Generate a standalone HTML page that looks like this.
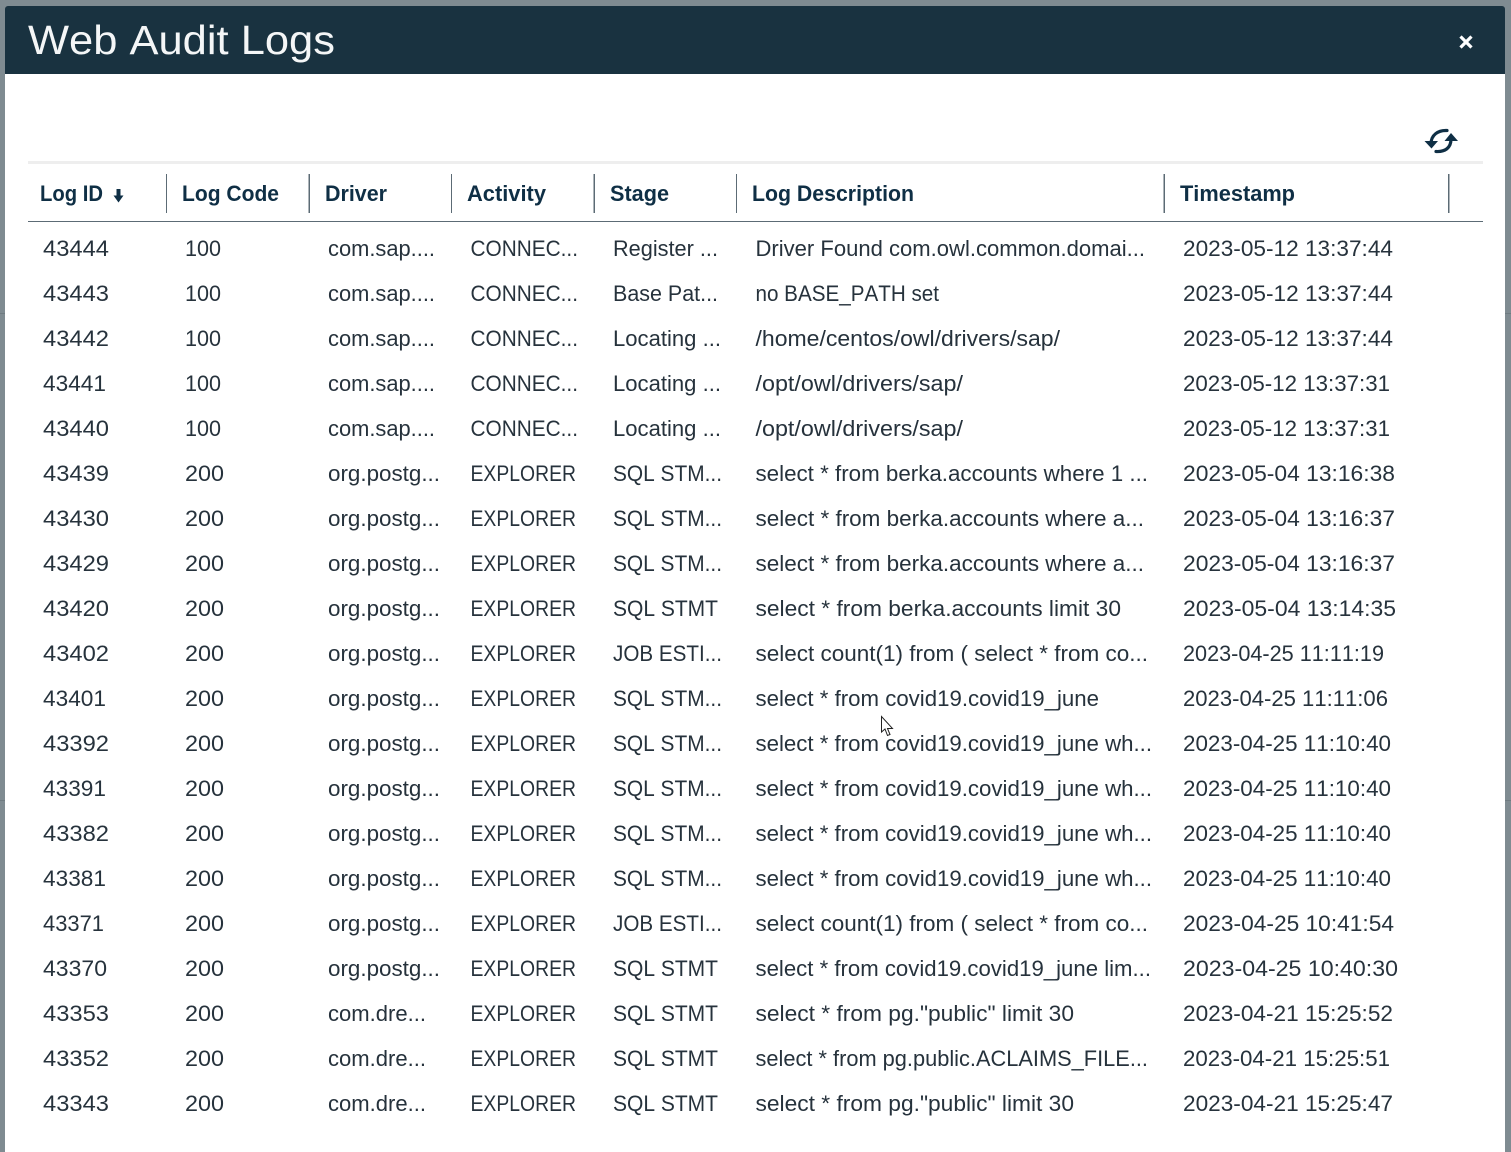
<!DOCTYPE html>
<html><head><meta charset="utf-8"><title>Web Audit Logs</title>
<style>
html,body{margin:0;padding:0;width:1511px;height:1152px;overflow:hidden;background:#7f8b91}
svg{display:block;position:absolute;left:0;top:0}
text{font-family:"Liberation Sans",sans-serif;font-size:22px;fill:#26323c;font-kerning:none}
.h{font-weight:700;fill:#0f2f45}
</style></head><body>
<svg width="1511" height="1152" viewBox="0 0 1511 1152">
<rect width="1511" height="1152" fill="#7f8b91"/>
<rect x="0" y="313" width="5" height="1" fill="#6f7b81"/><rect x="0" y="800" width="5" height="1" fill="#6f7b81"/>
<rect x="1505" y="313" width="6" height="1" fill="#6f7b81"/><rect x="1505" y="800" width="6" height="1" fill="#6f7b81"/>
<rect x="5" y="74" width="1500" height="1078" fill="#fff"/>
<path d="M5 74V9a3 3 0 0 1 3-3H1502a3 3 0 0 1 3 3V74Z" fill="#193240"/>
<text x="28" y="54" textLength="307" lengthAdjust="spacingAndGlyphs" style="font-size:41px;fill:#f4f6f7">Web Audit Logs</text>
<path d="M1460.500 36.500L1471.500 47.500M1471.500 36.500L1460.500 47.500" stroke="#fff" stroke-width="3.200" fill="none"/>
<g fill="none" stroke="#0f2f45" stroke-width="3.200" stroke-linecap="round">
<path d="M1431 144C1431 135 1438 130 1447 130.500"/>
<path d="M1451 139C1451 148 1445 152 1436 151.500"/>
</g>
<path d="M1424.500 141H1438L1431.500 148.500Z M1444.500 141H1458L1451 133Z" fill="#0f2f45"/>
<rect x="28" y="161" width="1455" height="3" fill="#eeeeee"/>
<rect x="28" y="221" width="1455" height="1" fill="#5c6b75"/>
<g fill="#5c6b75">
<rect x="166" y="174" width="1" height="39"/><rect x="308.500" y="174" width="1.500" height="39"/><rect x="451" y="174" width="1" height="39"/><rect x="593.500" y="174" width="1.500" height="39"/><rect x="736" y="174" width="1" height="39"/><rect x="1163.500" y="174" width="1.500" height="39"/><rect x="1448" y="174" width="1.500" height="39"/>
</g>
<g class="hd">
<text class="h" x="40" y="201" textLength="63" lengthAdjust="spacingAndGlyphs">Log ID</text>
<text class="h" x="182" y="201" textLength="97" lengthAdjust="spacingAndGlyphs">Log Code</text>
<text class="h" x="325" y="201" textLength="62" lengthAdjust="spacingAndGlyphs">Driver</text>
<text class="h" x="467" y="201" textLength="79" lengthAdjust="spacingAndGlyphs">Activity</text>
<text class="h" x="610" y="201" textLength="59" lengthAdjust="spacingAndGlyphs">Stage</text>
<text class="h" x="752" y="201" textLength="162" lengthAdjust="spacingAndGlyphs">Log Description</text>
<text class="h" x="1180" y="201" textLength="115" lengthAdjust="spacingAndGlyphs">Timestamp</text>
</g>
<path d="M116.500 189H120.500V195.500H123.500L118.500 202.500L113.500 195.500H116.500Z" fill="#0f2f45"/>

<text x="43" y="256" textLength="66" lengthAdjust="spacingAndGlyphs">43444</text><text x="185" y="256" textLength="36" lengthAdjust="spacingAndGlyphs">100</text><text x="328" y="256" textLength="107" lengthAdjust="spacingAndGlyphs">com.sap....</text><text x="470.500" y="256" textLength="107.500" lengthAdjust="spacingAndGlyphs">CONNEC...</text><text x="613" y="256" textLength="105" lengthAdjust="spacingAndGlyphs">Register ...</text><text x="755.500" y="256" textLength="389.500" lengthAdjust="spacingAndGlyphs">Driver Found com.owl.common.domai...</text><text x="1183" y="256" textLength="210" lengthAdjust="spacingAndGlyphs">2023-05-12 13:37:44</text>
<text x="43" y="301" textLength="66" lengthAdjust="spacingAndGlyphs">43443</text><text x="185" y="301" textLength="36" lengthAdjust="spacingAndGlyphs">100</text><text x="328" y="301" textLength="107" lengthAdjust="spacingAndGlyphs">com.sap....</text><text x="470.500" y="301" textLength="107.500" lengthAdjust="spacingAndGlyphs">CONNEC...</text><text x="613" y="301" textLength="105" lengthAdjust="spacingAndGlyphs">Base Pat...</text><text x="755.500" y="301" textLength="183.500" lengthAdjust="spacingAndGlyphs">no BASE_PATH set</text><text x="1183" y="301" textLength="210" lengthAdjust="spacingAndGlyphs">2023-05-12 13:37:44</text>
<text x="43" y="346" textLength="66" lengthAdjust="spacingAndGlyphs">43442</text><text x="185" y="346" textLength="36" lengthAdjust="spacingAndGlyphs">100</text><text x="328" y="346" textLength="107" lengthAdjust="spacingAndGlyphs">com.sap....</text><text x="470.500" y="346" textLength="107.500" lengthAdjust="spacingAndGlyphs">CONNEC...</text><text x="613" y="346" textLength="108" lengthAdjust="spacingAndGlyphs">Locating ...</text><text x="755.500" y="346" textLength="304.500" lengthAdjust="spacingAndGlyphs">/home/centos/owl/drivers/sap/</text><text x="1183" y="346" textLength="210" lengthAdjust="spacingAndGlyphs">2023-05-12 13:37:44</text>
<text x="43" y="391" textLength="63" lengthAdjust="spacingAndGlyphs">43441</text><text x="185" y="391" textLength="36" lengthAdjust="spacingAndGlyphs">100</text><text x="328" y="391" textLength="107" lengthAdjust="spacingAndGlyphs">com.sap....</text><text x="470.500" y="391" textLength="107.500" lengthAdjust="spacingAndGlyphs">CONNEC...</text><text x="613" y="391" textLength="108" lengthAdjust="spacingAndGlyphs">Locating ...</text><text x="755.500" y="391" textLength="207.500" lengthAdjust="spacingAndGlyphs">/opt/owl/drivers/sap/</text><text x="1183" y="391" textLength="207" lengthAdjust="spacingAndGlyphs">2023-05-12 13:37:31</text>
<text x="43" y="436" textLength="66" lengthAdjust="spacingAndGlyphs">43440</text><text x="185" y="436" textLength="36" lengthAdjust="spacingAndGlyphs">100</text><text x="328" y="436" textLength="107" lengthAdjust="spacingAndGlyphs">com.sap....</text><text x="470.500" y="436" textLength="107.500" lengthAdjust="spacingAndGlyphs">CONNEC...</text><text x="613" y="436" textLength="108" lengthAdjust="spacingAndGlyphs">Locating ...</text><text x="755.500" y="436" textLength="207.500" lengthAdjust="spacingAndGlyphs">/opt/owl/drivers/sap/</text><text x="1183" y="436" textLength="207" lengthAdjust="spacingAndGlyphs">2023-05-12 13:37:31</text>
<text x="43" y="481" textLength="66" lengthAdjust="spacingAndGlyphs">43439</text><text x="185" y="481" textLength="39" lengthAdjust="spacingAndGlyphs">200</text><text x="328" y="481" textLength="112" lengthAdjust="spacingAndGlyphs">org.postg...</text><text x="470.500" y="481" textLength="105.500" lengthAdjust="spacingAndGlyphs">EXPLORER</text><text x="613" y="481" textLength="109" lengthAdjust="spacingAndGlyphs">SQL STM...</text><text x="755.500" y="481" textLength="392.500" lengthAdjust="spacingAndGlyphs">select * from berka.accounts where 1 ...</text><text x="1183" y="481" textLength="212" lengthAdjust="spacingAndGlyphs">2023-05-04 13:16:38</text>
<text x="43" y="526" textLength="66" lengthAdjust="spacingAndGlyphs">43430</text><text x="185" y="526" textLength="39" lengthAdjust="spacingAndGlyphs">200</text><text x="328" y="526" textLength="112" lengthAdjust="spacingAndGlyphs">org.postg...</text><text x="470.500" y="526" textLength="105.500" lengthAdjust="spacingAndGlyphs">EXPLORER</text><text x="613" y="526" textLength="109" lengthAdjust="spacingAndGlyphs">SQL STM...</text><text x="755.500" y="526" textLength="388.500" lengthAdjust="spacingAndGlyphs">select * from berka.accounts where a...</text><text x="1183" y="526" textLength="212" lengthAdjust="spacingAndGlyphs">2023-05-04 13:16:37</text>
<text x="43" y="571" textLength="66" lengthAdjust="spacingAndGlyphs">43429</text><text x="185" y="571" textLength="39" lengthAdjust="spacingAndGlyphs">200</text><text x="328" y="571" textLength="112" lengthAdjust="spacingAndGlyphs">org.postg...</text><text x="470.500" y="571" textLength="105.500" lengthAdjust="spacingAndGlyphs">EXPLORER</text><text x="613" y="571" textLength="109" lengthAdjust="spacingAndGlyphs">SQL STM...</text><text x="755.500" y="571" textLength="388.500" lengthAdjust="spacingAndGlyphs">select * from berka.accounts where a...</text><text x="1183" y="571" textLength="212" lengthAdjust="spacingAndGlyphs">2023-05-04 13:16:37</text>
<text x="43" y="616" textLength="66" lengthAdjust="spacingAndGlyphs">43420</text><text x="185" y="616" textLength="39" lengthAdjust="spacingAndGlyphs">200</text><text x="328" y="616" textLength="112" lengthAdjust="spacingAndGlyphs">org.postg...</text><text x="470.500" y="616" textLength="105.500" lengthAdjust="spacingAndGlyphs">EXPLORER</text><text x="613" y="616" textLength="105" lengthAdjust="spacingAndGlyphs">SQL STMT</text><text x="755.500" y="616" textLength="365.500" lengthAdjust="spacingAndGlyphs">select * from berka.accounts limit 30</text><text x="1183" y="616" textLength="213" lengthAdjust="spacingAndGlyphs">2023-05-04 13:14:35</text>
<text x="43" y="661" textLength="66" lengthAdjust="spacingAndGlyphs">43402</text><text x="185" y="661" textLength="39" lengthAdjust="spacingAndGlyphs">200</text><text x="328" y="661" textLength="112" lengthAdjust="spacingAndGlyphs">org.postg...</text><text x="470.500" y="661" textLength="105.500" lengthAdjust="spacingAndGlyphs">EXPLORER</text><text x="613" y="661" textLength="109" lengthAdjust="spacingAndGlyphs">JOB ESTI...</text><text x="755.500" y="661" textLength="392.500" lengthAdjust="spacingAndGlyphs">select count(1) from ( select * from co...</text><text x="1183" y="661" textLength="201" lengthAdjust="spacingAndGlyphs">2023-04-25 11:11:19</text>
<text x="43" y="706" textLength="63" lengthAdjust="spacingAndGlyphs">43401</text><text x="185" y="706" textLength="39" lengthAdjust="spacingAndGlyphs">200</text><text x="328" y="706" textLength="112" lengthAdjust="spacingAndGlyphs">org.postg...</text><text x="470.500" y="706" textLength="105.500" lengthAdjust="spacingAndGlyphs">EXPLORER</text><text x="613" y="706" textLength="109" lengthAdjust="spacingAndGlyphs">SQL STM...</text><text x="755.500" y="706" textLength="343.500" lengthAdjust="spacingAndGlyphs">select * from covid19.covid19_june</text><text x="1183" y="706" textLength="205" lengthAdjust="spacingAndGlyphs">2023-04-25 11:11:06</text>
<text x="43" y="751" textLength="66" lengthAdjust="spacingAndGlyphs">43392</text><text x="185" y="751" textLength="39" lengthAdjust="spacingAndGlyphs">200</text><text x="328" y="751" textLength="112" lengthAdjust="spacingAndGlyphs">org.postg...</text><text x="470.500" y="751" textLength="105.500" lengthAdjust="spacingAndGlyphs">EXPLORER</text><text x="613" y="751" textLength="109" lengthAdjust="spacingAndGlyphs">SQL STM...</text><text x="755.500" y="751" textLength="396.500" lengthAdjust="spacingAndGlyphs">select * from covid19.covid19_june wh...</text><text x="1183" y="751" textLength="208" lengthAdjust="spacingAndGlyphs">2023-04-25 11:10:40</text>
<text x="43" y="796" textLength="63" lengthAdjust="spacingAndGlyphs">43391</text><text x="185" y="796" textLength="39" lengthAdjust="spacingAndGlyphs">200</text><text x="328" y="796" textLength="112" lengthAdjust="spacingAndGlyphs">org.postg...</text><text x="470.500" y="796" textLength="105.500" lengthAdjust="spacingAndGlyphs">EXPLORER</text><text x="613" y="796" textLength="109" lengthAdjust="spacingAndGlyphs">SQL STM...</text><text x="755.500" y="796" textLength="396.500" lengthAdjust="spacingAndGlyphs">select * from covid19.covid19_june wh...</text><text x="1183" y="796" textLength="208" lengthAdjust="spacingAndGlyphs">2023-04-25 11:10:40</text>
<text x="43" y="841" textLength="66" lengthAdjust="spacingAndGlyphs">43382</text><text x="185" y="841" textLength="39" lengthAdjust="spacingAndGlyphs">200</text><text x="328" y="841" textLength="112" lengthAdjust="spacingAndGlyphs">org.postg...</text><text x="470.500" y="841" textLength="105.500" lengthAdjust="spacingAndGlyphs">EXPLORER</text><text x="613" y="841" textLength="109" lengthAdjust="spacingAndGlyphs">SQL STM...</text><text x="755.500" y="841" textLength="396.500" lengthAdjust="spacingAndGlyphs">select * from covid19.covid19_june wh...</text><text x="1183" y="841" textLength="208" lengthAdjust="spacingAndGlyphs">2023-04-25 11:10:40</text>
<text x="43" y="886" textLength="63" lengthAdjust="spacingAndGlyphs">43381</text><text x="185" y="886" textLength="39" lengthAdjust="spacingAndGlyphs">200</text><text x="328" y="886" textLength="112" lengthAdjust="spacingAndGlyphs">org.postg...</text><text x="470.500" y="886" textLength="105.500" lengthAdjust="spacingAndGlyphs">EXPLORER</text><text x="613" y="886" textLength="109" lengthAdjust="spacingAndGlyphs">SQL STM...</text><text x="755.500" y="886" textLength="396.500" lengthAdjust="spacingAndGlyphs">select * from covid19.covid19_june wh...</text><text x="1183" y="886" textLength="208" lengthAdjust="spacingAndGlyphs">2023-04-25 11:10:40</text>
<text x="43" y="931" textLength="61" lengthAdjust="spacingAndGlyphs">43371</text><text x="185" y="931" textLength="39" lengthAdjust="spacingAndGlyphs">200</text><text x="328" y="931" textLength="112" lengthAdjust="spacingAndGlyphs">org.postg...</text><text x="470.500" y="931" textLength="105.500" lengthAdjust="spacingAndGlyphs">EXPLORER</text><text x="613" y="931" textLength="109" lengthAdjust="spacingAndGlyphs">JOB ESTI...</text><text x="755.500" y="931" textLength="392.500" lengthAdjust="spacingAndGlyphs">select count(1) from ( select * from co...</text><text x="1183" y="931" textLength="211" lengthAdjust="spacingAndGlyphs">2023-04-25 10:41:54</text>
<text x="43" y="976" textLength="64" lengthAdjust="spacingAndGlyphs">43370</text><text x="185" y="976" textLength="39" lengthAdjust="spacingAndGlyphs">200</text><text x="328" y="976" textLength="112" lengthAdjust="spacingAndGlyphs">org.postg...</text><text x="470.500" y="976" textLength="105.500" lengthAdjust="spacingAndGlyphs">EXPLORER</text><text x="613" y="976" textLength="105" lengthAdjust="spacingAndGlyphs">SQL STMT</text><text x="755.500" y="976" textLength="395.500" lengthAdjust="spacingAndGlyphs">select * from covid19.covid19_june lim...</text><text x="1183" y="976" textLength="215" lengthAdjust="spacingAndGlyphs">2023-04-25 10:40:30</text>
<text x="43" y="1021" textLength="66" lengthAdjust="spacingAndGlyphs">43353</text><text x="185" y="1021" textLength="39" lengthAdjust="spacingAndGlyphs">200</text><text x="328" y="1021" textLength="98" lengthAdjust="spacingAndGlyphs">com.dre...</text><text x="470.500" y="1021" textLength="105.500" lengthAdjust="spacingAndGlyphs">EXPLORER</text><text x="613" y="1021" textLength="105" lengthAdjust="spacingAndGlyphs">SQL STMT</text><text x="755.500" y="1021" textLength="318.500" lengthAdjust="spacingAndGlyphs">select * from pg."public" limit 30</text><text x="1183" y="1021" textLength="210" lengthAdjust="spacingAndGlyphs">2023-04-21 15:25:52</text>
<text x="43" y="1066" textLength="66" lengthAdjust="spacingAndGlyphs">43352</text><text x="185" y="1066" textLength="39" lengthAdjust="spacingAndGlyphs">200</text><text x="328" y="1066" textLength="98" lengthAdjust="spacingAndGlyphs">com.dre...</text><text x="470.500" y="1066" textLength="105.500" lengthAdjust="spacingAndGlyphs">EXPLORER</text><text x="613" y="1066" textLength="105" lengthAdjust="spacingAndGlyphs">SQL STMT</text><text x="755.500" y="1066" textLength="392.500" lengthAdjust="spacingAndGlyphs">select * from pg.public.ACLAIMS_FILE...</text><text x="1183" y="1066" textLength="207" lengthAdjust="spacingAndGlyphs">2023-04-21 15:25:51</text>
<text x="43" y="1111" textLength="66" lengthAdjust="spacingAndGlyphs">43343</text><text x="185" y="1111" textLength="39" lengthAdjust="spacingAndGlyphs">200</text><text x="328" y="1111" textLength="98" lengthAdjust="spacingAndGlyphs">com.dre...</text><text x="470.500" y="1111" textLength="105.500" lengthAdjust="spacingAndGlyphs">EXPLORER</text><text x="613" y="1111" textLength="105" lengthAdjust="spacingAndGlyphs">SQL STMT</text><text x="755.500" y="1111" textLength="318.500" lengthAdjust="spacingAndGlyphs">select * from pg."public" limit 30</text><text x="1183" y="1111" textLength="210" lengthAdjust="spacingAndGlyphs">2023-04-21 15:25:47</text>

<path d="M881.500 716.500V732L885 729L887.500 735.500L890 734.500L887.500 728.500H892.500Z" fill="#fff" stroke="#222" stroke-width="1"/>
</svg>
</body></html>
